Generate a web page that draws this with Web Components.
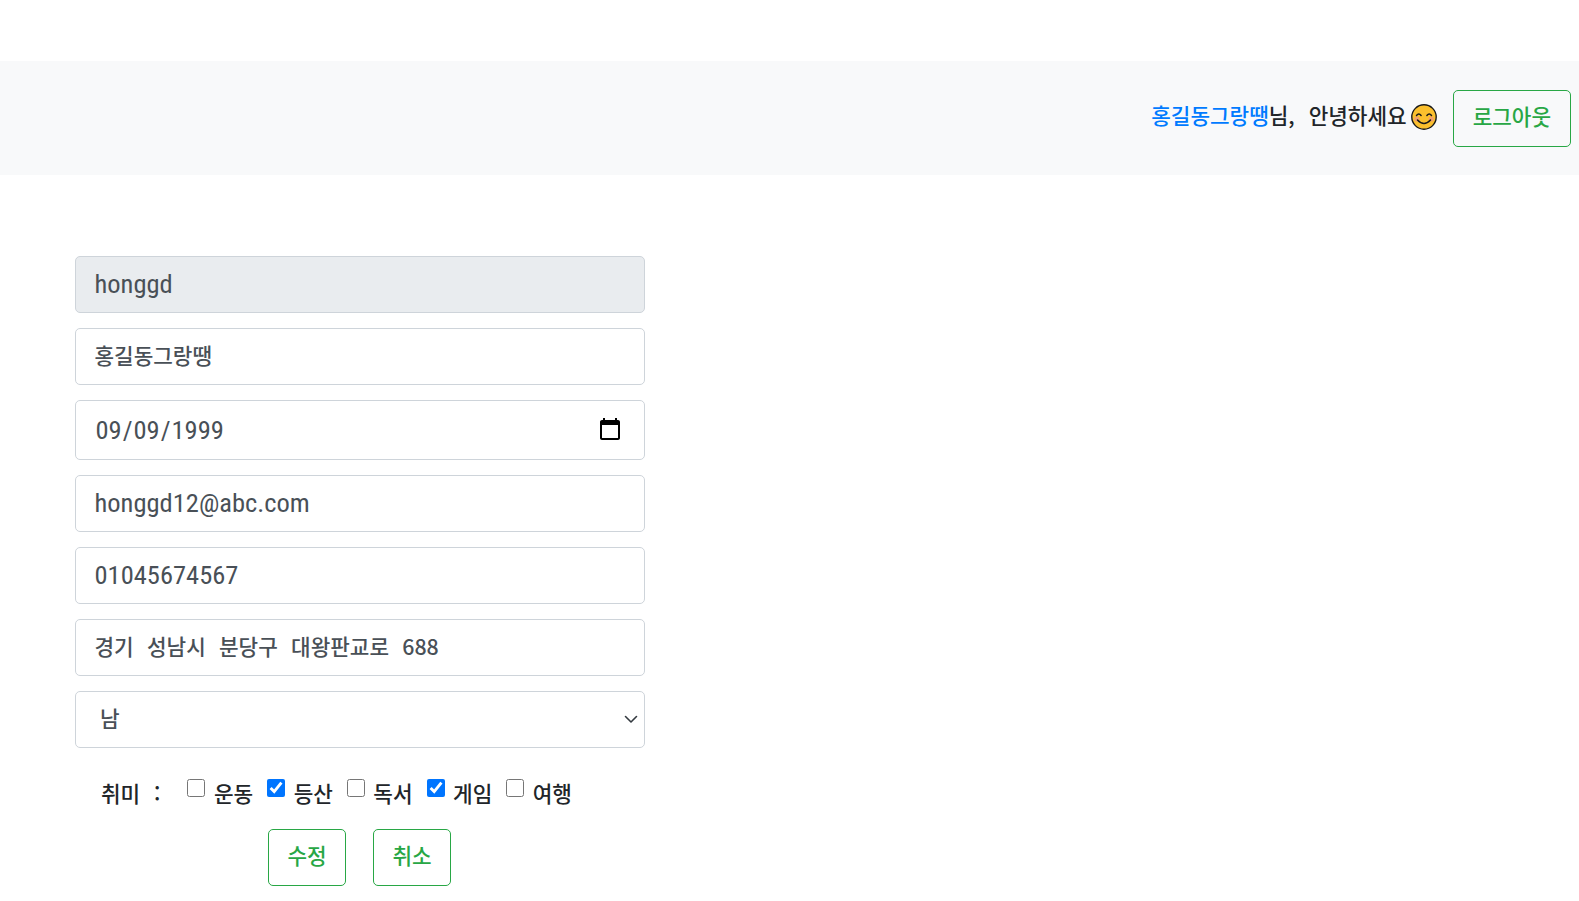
<!DOCTYPE html>
<html lang="ko">
<head>
<meta charset="utf-8">
<title>회원정보 수정</title>
<style>
    html, body { margin: 0; padding: 0; background: #fff; }
    body { font: 500 21.3px "Noto Sans CJK KR", sans-serif; color: #212529; }
</style>
</head>
<body>
<app-page>
    <app-navbar slot="nav" nick="홍길동그랑땡"></app-navbar>
    <profile-form slot="main"></profile-form>
</app-page>
<script>
const HANGUL = '500 21.3px "Noto Sans CJK KR", sans-serif';
const LATIN = '400 26.5px Roboto, "Noto Sans CJK KR", sans-serif';

class AppPage extends HTMLElement {
    constructor() {
        super();
        this.attachShadow({mode: 'open'});
        this.shadowRoot.innerHTML = `
            <style>
                :host { display: block; padding-top: 61px; }
                main { padding: 81px 0 0 75px; width: 570px; }
            </style>
            <slot name="nav"></slot>
            <main><slot name="main"></slot></main>
        `;
    }
}

class OutlineBtn extends HTMLElement {
    constructor() {
        super();
        this.attachShadow({mode: 'open'});
        this.shadowRoot.innerHTML = `
            <style>
                :host { display: inline-block; }
                button {
                    height: 57px;
                    padding: 0 var(--pad, 18.4px) 6px;
                    background: transparent;
                    color: #28a745;
                    border: 1px solid #28a745;
                    border-radius: 5px;
                    font: ${HANGUL};
                    cursor: pointer;
                }
            </style>
            <button type="button"><slot></slot></button>
        `;
    }
}

class AppNavbar extends HTMLElement {
    constructor() {
        super();
        this.attachShadow({mode: 'open'});
        this.shadowRoot.innerHTML = `
            <style>
                :host { display: block; }
                nav {
                    height: 114px;
                    box-sizing: border-box;
                    background: #f8f9fa;
                    display: flex;
                    align-items: center;
                    justify-content: flex-end;
                    padding-right: 8px;
                }
                .hello { display: flex; align-items: center; margin-right: 16px; white-space: pre; word-spacing: 1px; }
                .text { position: relative; top: -4px; }
                .nick { color: #007bff; }
                svg { margin: 0 0 2px 4px; }
                outline-btn { --pad: 19px; }
            </style>
            <nav>
                <span class="hello"><span class="text"><span class="nick">${this.getAttribute('nick')}</span>님,  안녕하세요</span><svg width="26" height="26" viewBox="0 0 26 26">
                    <circle cx="13" cy="13" r="12.2" fill="#fbc02d" stroke="#1a1a1a" stroke-width="1.4"/>
                    <circle cx="5.8" cy="15" r="2.6" fill="#f4a06a"/>
                    <circle cx="20.2" cy="15" r="2.6" fill="#f4a06a"/>
                    <path d="M5.5 11.5q2.3-3 4.6 0M15.9 11.5q2.3-3 4.6 0M6.5 16q6.5 7 13 0" fill="none" stroke="#1a1a1a" stroke-width="1.5" stroke-linecap="round"/>
                </svg></span>
                <outline-btn>로그아웃</outline-btn>
            </nav>
        `;
    }
}

class FormField extends HTMLElement {
    constructor() {
        super();
        this.attachShadow({mode: 'open'});
        const type = this.getAttribute('type') || 'text';
        const h = type === 'date' ? 60 : 57;
        const hangul = this.hasAttribute('hangul');
        this.shadowRoot.innerHTML = `
            <style>
                :host { display: block; margin-bottom: 15px; }
                input {
                    display: block;
                    width: 100%;
                    height: ${h}px;
                    box-sizing: border-box;
                    padding: 0 20px ${hangul ? 4 : 2}px 18.5px;
                    border: 1px solid #ced4da;
                    border-radius: 5px;
                    background: #fff;
                    color: #495057;
                    font: ${hangul ? HANGUL : LATIN};
                    font-stretch: ${hangul ? '100%' : '75%'};
                    word-spacing: ${hangul ? 7.3 : 0}px;
                    outline: none;
                }
                input[readonly] { background: #e9ecef; }
                input::-webkit-calendar-picker-indicator { margin: 2px -1px 0 0; }
            </style>
            <input type="${type}" value="${this.getAttribute('value')}" ${this.hasAttribute('readonly') ? 'readonly' : ''}>
        `;
    }
}

class GenderSelect extends HTMLElement {
    constructor() {
        super();
        this.attachShadow({mode: 'open'});
        this.shadowRoot.innerHTML = `
            <style>
                :host { display: block; margin-bottom: 15px; position: relative; }
                select {
                    display: block;
                    width: 100%;
                    height: 57px;
                    box-sizing: border-box;
                    padding: 0 24px 5px;
                    border: 1px solid #ced4da;
                    border-radius: 5px;
                    background: #fff;
                    color: #495057;
                    font: ${HANGUL};
                    appearance: none;
                }
                svg { position: absolute; right: 7px; top: 21px; pointer-events: none; }
            </style>
            <select><option selected>남</option><option>여</option></select>
            <svg width="14" height="14" viewBox="0 0 14 14"><path d="M1.5 4.5L7 10l5.5-5.5" fill="none" stroke="#343a40" stroke-width="1.6" stroke-linecap="round" stroke-linejoin="round"/></svg>
        `;
    }
}

class HobbyCheck extends HTMLElement {
    constructor() {
        super();
        this.attachShadow({mode: 'open'});
        this.shadowRoot.innerHTML = `
            <style>
                :host { display: inline-flex; align-items: flex-start; }
                input { width: 18px; height: 18px; margin: 0 8.5px 0 0; accent-color: #0075ff; }
                label { line-height: 26px; margin-top: 1px; }
            </style>
            <input type="checkbox" ${this.hasAttribute('checked') ? 'checked' : ''}>
            <label><slot></slot></label>
        `;
    }
}

class ProfileForm extends HTMLElement {
    constructor() {
        super();
        this.attachShadow({mode: 'open'});
        this.shadowRoot.innerHTML = `
            <style>
                :host { display: block; }
                .hobby { display: flex; align-items: flex-start; gap: 14px; padding: 16px 0 0 26px; height: 66px; box-sizing: border-box; white-space: pre; }
                .hobby .title { margin: 1px 13px 0 0; line-height: 26px; word-spacing: 1px; }
                .actions { display: flex; justify-content: center; gap: 27px; padding-right: 1px; }
            </style>
            <form-field value="honggd" readonly></form-field>
            <form-field hangul value="홍길동그랑땡"></form-field>
            <form-field type="date" value="1999-09-09"></form-field>
            <form-field value="honggd12@abc.com"></form-field>
            <form-field value="01045674567"></form-field>
            <form-field hangul value="경기 성남시 분당구 대왕판교로 688"></form-field>
            <gender-select></gender-select>
            <div class="hobby">
                <span class="title">취미  :</span>
                <hobby-check>운동</hobby-check>
                <hobby-check checked>등산</hobby-check>
                <hobby-check>독서</hobby-check>
                <hobby-check checked>게임</hobby-check>
                <hobby-check>여행</hobby-check>
            </div>
            <div class="actions">
                <outline-btn>수정</outline-btn>
                <outline-btn>취소</outline-btn>
            </div>
        `;
    }
}

customElements.define('app-page', AppPage);
customElements.define('outline-btn', OutlineBtn);
customElements.define('app-navbar', AppNavbar);
customElements.define('form-field', FormField);
customElements.define('gender-select', GenderSelect);
customElements.define('hobby-check', HobbyCheck);
customElements.define('profile-form', ProfileForm);
</script>
</body>
</html>
